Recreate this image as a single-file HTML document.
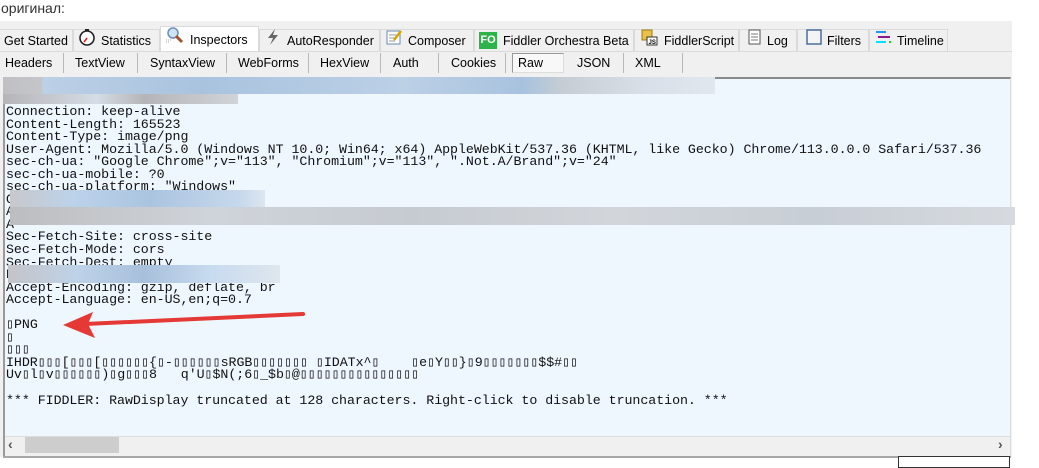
<!DOCTYPE html>
<html><head><meta charset="utf-8"><style>
*{margin:0;padding:0;box-sizing:border-box}
body{width:1039px;height:468px;background:#fff;position:relative;overflow:hidden;font-family:"Liberation Sans",sans-serif;}
.abs{position:absolute}
.cap{left:1px;top:0;font-size:14px;color:#333}
.bar{left:0;top:21px;width:1012px;height:436px;background:#f0f0f0}
.tab{position:absolute;top:29px;height:22px;font-size:12.5px;color:#000;line-height:22px;border:1px solid #dadada;border-bottom:none;background:#f0f0f0;padding-left:4px;white-space:nowrap}
.tab.sel{top:26px;height:26px;background:#fff;line-height:26px}
.ic{display:inline-block;vertical-align:middle;margin-right:5px;margin-top:-3px}
.sub{position:absolute;top:53px;height:20px;font-size:12.5px;line-height:20px;white-space:nowrap}
.sep{position:absolute;top:53px;width:1px;height:20px;background:#b8b8b8}
.panel{left:3px;top:77px;width:1008px;height:379px;background:#eef6fe;border-left:2px solid #9a9a9a;border-top:2px solid #8a8a8a;border-right:1px solid #ddd}
pre{position:absolute;left:6px;font-family:"Liberation Mono","DejaVu Sans Mono",monospace;font-size:13.3px;line-height:12.55px;color:#111;letter-spacing:-0.05px}
.blur{position:absolute}
</style></head><body>
<div class="abs cap">оригинал:</div>
<div class="abs bar"></div>
<div class="tab" style="left:0;width:73px;border-left:none">Get Started</div>
<div class="tab" style="left:73px;width:87px"><span class="ic"><svg width="18" height="18" viewBox="0 0 18 18"><circle cx="9" cy="10" r="7" fill="#fff" stroke="#222" stroke-width="1.6"/><rect x="7" y="1" width="4" height="2" fill="#222"/><path d="M9 10L6 14" stroke="#e02020" stroke-width="1.5"/></svg></span>Statistics</div>
<div class="tab sel" style="left:160px;width:99px"><span class="ic"><svg width="20" height="18" viewBox="0 0 20 18"><circle cx="8" cy="7" r="5" fill="#cfe3f7" stroke="#6b8fb5" stroke-width="1.5"/><path d="M11 10l6 6" stroke="#a0522d" stroke-width="3"/><path d="M1 14h5M1 16h4" stroke="#aaa" stroke-dasharray="1 1"/></svg></span>Inspectors</div>
<div class="tab" style="left:259px;width:121px"><span class="ic"><svg width="18" height="18" viewBox="0 0 18 18"><path d="M11 1L4 10h5l-3 7 8-10H9z" fill="#666"/></svg></span>AutoResponder</div>
<div class="tab" style="left:380px;width:94px"><span class="ic"><svg width="18" height="18" viewBox="0 0 18 18"><rect x="2" y="3" width="13" height="13" fill="#fff" stroke="#6a8ab0"/><path d="M4 7h8M4 10h8M4 13h6" stroke="#999"/><path d="M9 12l7-9" stroke="#d9a400" stroke-width="2.5"/></svg></span>Composer</div>
<div class="tab" style="left:474px;width:160px"><span class="ic" style="background:#2db34a;color:#fff;font-weight:bold;font-size:11px;width:18px;height:17px;line-height:17px;text-align:center;margin-right:6px">FO</span>Fiddler Orchestra Beta</div>
<div class="tab" style="left:634px;width:105px"><span class="ic"><svg width="20" height="18" viewBox="0 0 20 18"><path d="M3 2h10v10H3z" fill="#e8c04a" stroke="#a07a10"/><rect x="8" y="9" width="10" height="8" fill="#fff" stroke="#333"/><text x="9.5" y="16" font-size="6" font-family="Liberation Sans" font-weight="bold">JS</text></svg></span>FiddlerScript</div>
<div class="tab" style="left:739px;width:58px"><span class="ic" style="margin-left:4px"><svg width="14" height="16" viewBox="0 0 14 16"><rect x="1" y="1" width="11" height="14" fill="#fff" stroke="#555"/><path d="M3 5h7M3 8h7M3 11h7" stroke="#777"/></svg></span>Log</div>
<div class="tab" style="left:797px;width:72px"><span class="ic" style="margin-left:4px"><svg width="16" height="16" viewBox="0 0 16 16"><rect x="1" y="1" width="14" height="14" fill="#f4f4f4" stroke="#4a6f9a" stroke-width="1.5"/></svg></span>Filters</div>
<div class="tab" style="left:869px;width:79px"><span class="ic"><svg width="18" height="16" viewBox="0 0 18 16"><path d="M2 3h10" stroke="#2196f3" stroke-width="2"/><path d="M4 8h12" stroke="#8b1a8b" stroke-width="2"/><path d="M2 13h10" stroke="#00e5ff" stroke-width="2"/><rect x="15" y="12" width="2" height="2" fill="#2c2"/></svg></span>Timeline</div>
<div class="abs" style="left:0;top:51px;width:1012px;height:1px;background:#dadada"></div>

<div class="sub" style="left:5px">Headers</div><div class="sep" style="left:63px"></div>
<div class="sub" style="left:75px">TextView</div><div class="sep" style="left:137px"></div>
<div class="sub" style="left:150px">SyntaxView</div><div class="sep" style="left:226px"></div>
<div class="sub" style="left:238px">WebForms</div><div class="sep" style="left:308px"></div>
<div class="sub" style="left:320px">HexView</div><div class="sep" style="left:380px"></div>
<div class="sub" style="left:393px">Auth</div><div class="sep" style="left:438px"></div>
<div class="sub" style="left:451px">Cookies</div><div class="sep" style="left:505px"></div>
<div class="sub" style="left:512px;top:53px;width:52px;height:20px;border:1px solid #999;border-right-color:#ddd;border-bottom-color:#ddd;background:#f8f8f8;padding-left:5px;line-height:18px">Raw</div>
<div class="sub" style="left:577px">JSON</div><div class="sep" style="left:623px"></div>
<div class="sub" style="left:635px">XML</div><div class="sep" style="left:682px"></div>

<div class="abs panel"></div>
<div class="blur" style="left:3px;top:77px;width:712px;height:17px;background:linear-gradient(90deg,#c0c0c4 0,#c4c6c8 38px,#bcd0e6 40px,#a9c3df 200px,#bcd0e6 400px,#a8c2de 520px,#c6cdd4 560px,#d8dfe8 640px,#e0e7ef 712px)"></div>
<div class="blur" style="left:3px;top:94px;width:235px;height:10px;background:linear-gradient(90deg,#b5b5b8,#d5dce5 40%,#b5b5b8 60%,#d0d4d8)"></div>
<pre style="top:106px">Connection: keep-alive
Content-Length: 165523
Content-Type: image/png
User-Agent: Mozilla/5.0 (Windows NT 10.0; Win64; x64) AppleWebKit/537.36 (KHTML, like Gecko) Chrome/113.0.0.0 Safari/537.36
sec-ch-ua: "Google Chrome";v="113", "Chromium";v="113", ".Not.A/Brand";v="24"
sec-ch-ua-mobile: ?0
sec-ch-ua-platform: "Windows"
O
A
A
Sec-Fetch-Site: cross-site
Sec-Fetch-Mode: cors
Sec-Fetch-Dest: empty
R
Accept-Encoding: gzip, deflate, br
Accept-Language: en-US,en;q=0.7

&#9647;PNG
&#9647;
&#9647;&#9647;&#9647;
IHDR&#9647;&#9647;&#9647;[&#9647;&#9647;&#9647;[&#9647;&#9647;&#9647;&#9647;&#9647;&#9647;{&#9647;-&#9647;&#9647;&#9647;&#9647;&#9647;&#9647;sRGB&#9647;&#9647;&#9647;&#9647;&#9647;&#9647;&#9647; &#9647;IDATx^&#9647;    &#9647;e&#9647;Y&#9647;&#9647;}&#9647;9&#9647;&#9647;&#9647;&#9647;&#9647;&#9647;&#9647;$$#&#9647;&#9647;
Uv&#9647;l&#9647;v&#9647;&#9647;&#9647;&#9647;&#9647;&#9647;)&#9647;g&#9647;&#9647;&#9647;8   q'U&#9647;$N(;6&#9647;_$b&#9647;@&#9647;&#9647;&#9647;&#9647;&#9647;&#9647;&#9647;&#9647;&#9647;&#9647;&#9647;&#9647;&#9647;&#9647;&#9647;

*** FIDDLER: RawDisplay truncated at 128 characters. Right-click to disable truncation. ***</pre>
<div class="blur" style="left:10px;top:190px;width:255px;height:17px;background:linear-gradient(90deg,#c8c8cc,#bcd2ea 25%,#aac4e0 55%,#c6d8ec 90%,#dde6f0)"></div>
<div class="blur" style="left:10px;top:207px;width:1005px;height:18px;background:linear-gradient(90deg,#bcbdc0,#cfd4da 20%,#c6cbd1 40%,#d2d6db 60%,#c8ced5 80%,#d6dadf)"></div>
<div class="blur" style="left:8px;top:265px;width:272px;height:18px;background:linear-gradient(90deg,#c4c4c8,#bed2e8 25%,#a8c0dc 50%,#c8dbef 75%,#dfe6ee)"></div>

<svg class="abs" style="left:55px;top:308px" width="255" height="32" viewBox="0 0 255 32"><path d="M248 6L30 16" stroke="#e53935" stroke-width="4" stroke-linecap="round"/><path d="M8 17L38 4L33 16L40 30Z" fill="#e53935"/></svg>

<div class="abs" style="left:5px;top:436px;width:1005px;height:20px;background:#f0f0f0;border-top:1px solid #ddd"></div>
<div class="abs" style="left:25px;top:437px;width:94px;height:16px;background:#cdcdcd"></div>
<div class="abs" style="left:8px;top:436px;font-size:14px;color:#555;font-weight:bold">&lsaquo;</div>
<div class="abs" style="left:998px;top:436px;font-size:14px;color:#555;font-weight:bold">&rsaquo;</div>
<div class="abs" style="left:3px;top:456px;width:1008px;height:2px;background:#a8a8a8"></div>
<div class="abs" style="left:898px;top:456px;width:112px;height:12px;border:1px solid #333;background:#fff"></div>
</body></html>
